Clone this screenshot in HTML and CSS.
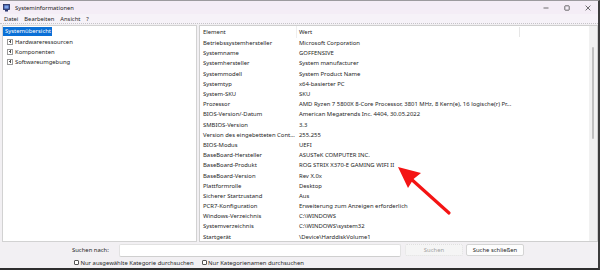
FILE: index.html
```html
<!DOCTYPE html>
<html lang="de">
<head>
<meta charset="utf-8">
<title>Systeminformationen</title>
<link rel="stylesheet" href="styles.css">
</head>
<body>
<div class="window">
  <div class="titlebar">
    <svg class="appicon" width="8" height="8" viewBox="0 0 8 8">
      <rect x="0.5" y="0.5" width="6" height="5" fill="#3b4f9a" stroke="#1f2a5c" stroke-width="0.8"/>
      <rect x="1.5" y="1.5" width="4" height="3" fill="#7fa3e6"/>
      <rect x="2" y="6" width="3" height="1.5" fill="#2a3770"/>
    </svg>
    <span class="title">Systeminformationen</span>
    <div class="controls">
      <span class="ctl"><svg width="8" height="8" viewBox="0 0 8 8"><line x1="1.5" y1="4" x2="6.5" y2="4" stroke="#333" stroke-width="0.7"/></svg></span>
      <span class="ctl"><svg width="8" height="8" viewBox="0 0 8 8"><rect x="1.8" y="1.8" width="4.4" height="4.4" rx="0.6" fill="none" stroke="#333" stroke-width="0.7"/></svg></span>
      <span class="ctl"><svg width="8" height="8" viewBox="0 0 8 8"><path d="M1.6 1.6 L6.4 6.4 M6.4 1.6 L1.6 6.4" stroke="#333" stroke-width="0.7"/></svg></span>
    </div>
  </div>
  <div class="menubar">
    <span>Datei</span><span>Bearbeiten</span><span>Ansicht</span><span>?</span>
  </div>
  <div class="main">
    <div class="tree">
      <div class="node root"><span class="sel">Systemübersicht</span></div>
      <div class="node"><span class="exp"></span>Hardwareressourcen</div>
      <div class="node"><span class="exp"></span>Komponenten</div>
      <div class="node"><span class="exp"></span>Softwareumgebung</div>
    </div>
    <div class="listpane">
      <div class="table">
        <div class="row head"><span class="c1">Element</span><span class="c2">Wert</span><span class="c3"></span></div>
        <div class="row"><span class="c1">Betriebssystemhersteller</span><span class="c2">Microsoft Corporation</span></div>
        <div class="row"><span class="c1">Systemname</span><span class="c2">GOFFENSIVE</span></div>
        <div class="row"><span class="c1">Systemhersteller</span><span class="c2">System manufacturer</span></div>
        <div class="row"><span class="c1">Systemmodell</span><span class="c2">System Product Name</span></div>
        <div class="row"><span class="c1">Systemtyp</span><span class="c2">x64-basierter PC</span></div>
        <div class="row"><span class="c1">System-SKU</span><span class="c2">SKU</span></div>
        <div class="row"><span class="c1">Prozessor</span><span class="c2">AMD Ryzen 7 5800X 8-Core Processor, 3801 MHz, 8 Kern(e), 16 logische(r) Pr...</span></div>
        <div class="row"><span class="c1">BIOS-Version/-Datum</span><span class="c2">American Megatrends Inc. 4404, 30.05.2022</span></div>
        <div class="row"><span class="c1">SMBIOS-Version</span><span class="c2">3.3</span></div>
        <div class="row"><span class="c1">Version des eingebetteten Cont...</span><span class="c2">255.255</span></div>
        <div class="row"><span class="c1">BIOS-Modus</span><span class="c2">UEFI</span></div>
        <div class="row"><span class="c1">BaseBoard-Hersteller</span><span class="c2">ASUSTeK COMPUTER INC.</span></div>
        <div class="row"><span class="c1">BaseBoard-Produkt</span><span class="c2">ROG STRIX X370-E GAMING WIFI II</span></div>
        <div class="row"><span class="c1">BaseBoard-Version</span><span class="c2">Rev X.0x</span></div>
        <div class="row"><span class="c1">Plattformrolle</span><span class="c2">Desktop</span></div>
        <div class="row"><span class="c1">Sicherer Startzustand</span><span class="c2">Aus</span></div>
        <div class="row"><span class="c1">PCR7-Konfiguration</span><span class="c2 wide">Erweiterung zum Anzeigen erforderlich</span></div>
        <div class="row"><span class="c1">Windows-Verzeichnis</span><span class="c2">C:\WINDOWS</span></div>
        <div class="row"><span class="c1">Systemverzeichnis</span><span class="c2">C:\WINDOWS\system32</span></div>
        <div class="row"><span class="c1">Startgerät</span><span class="c2">\Device\HarddiskVolume1</span></div>
      </div>
      <div class="scrollbar"><div class="thumb"></div></div>
    </div>
  </div>
  <div class="search">
    <span class="label">Suchen nach:</span>
    <span class="input"></span>
    <span class="btn disabled">Suchen</span>
    <span class="btn">Suche schließen</span>
  </div>
  <div class="checks">
    <label class="chk"><span class="box"></span>Nur ausgewählte Kategorie durchsuchen</label>
    <label class="chk second"><span class="box"></span>Nur Kategorienamen durchsuchen</label>
  </div>
  <svg class="arrow" width="600" height="270" viewBox="0 0 600 270">
    <line x1="449" y1="213" x2="410" y2="178" stroke="#f41414" stroke-width="3.2" stroke-linecap="round"/>
    <path d="M398 167 L421 173 L413.5 179 L408 188 Z" fill="#f41414"/>
  </svg>
</div>
</body>
</html>
```
FILE: styles.css
```css
html, body {
  margin: 0;
  padding: 0;
}
body {
  width: 600px;
  height: 270px;
  overflow: hidden;
  font-family: "Noto Sans", "Open Sans", sans-serif;
  font-size: 5.9px;
  color: #1e1e1e;
  background: #f0eff1;
}
.window {
  position: relative;
  width: 600px;
  height: 270px;
  box-sizing: border-box;
  border-top: 1px solid #9c9a9e;
  border-right: 2px solid #3c3c3c;
  border-bottom: 2px solid #2e2e2e;
  background: #f2f0f3;
  display: flex;
  flex-direction: column;
}
.titlebar {
  height: 13px;
  flex: none;
  background: #f4edf6;
  display: flex;
  align-items: center;
  padding-left: 3px;
}
.appicon {
  flex: none;
}
.title {
  margin-left: 4px;
  font-size: 5.8px;
  color: #1a1a1a;
}
.controls {
  margin-left: auto;
  display: flex;
  gap: 13px;
  padding-right: 6px;
}
.ctl {
  width: 8px;
  height: 8px;
  display: flex;
}
.menubar {
  height: 9px;
  flex: none;
  background: #f6f2f8;
  border-bottom: 1px dotted #c6c4c8;
  display: flex;
  align-items: center;
  gap: 6px;
  padding-left: 4px;
  font-size: 5.8px;
}
.main {
  height: 219px;
  flex: none;
  box-sizing: border-box;
  padding: 1px 0 1px 2px;
  display: flex;
  gap: 2px;
}
.tree {
  width: 195px;
  flex: none;
  box-sizing: border-box;
  background: #fff;
  border: 1px solid #d2d2d2;
  padding-top: 0.5px;
}
.node {
  height: 10px;
  display: flex;
  align-items: center;
  padding-left: 4px;
}
.node.root {
  padding-left: 0;
}
.sel {
  background: #0a6fd6;
  color: #fff;
  padding: 1px 1px 1px 2px;
  line-height: 7.7px;
}
.exp {
  width: 4px;
  height: 4px;
  border: 0.8px solid #9a9a9a;
  margin-right: 2px;
  position: relative;
  background: #fff;
}
.exp::before, .exp::after {
  content: "";
  position: absolute;
  background: #555;
}
.exp::before {
  left: 0.8px;
  right: 0.8px;
  top: 1.6px;
  height: 0.8px;
}
.exp::after {
  top: 0.8px;
  bottom: 0.8px;
  left: 1.6px;
  width: 0.8px;
}
.listpane {
  flex: 1;
  box-sizing: border-box;
  background: #fff;
  border: 1px solid #cfcfcf;
  display: flex;
  min-width: 0;
}
.table {
  flex: 1;
  min-width: 0;
}
.row {
  height: 10.2px;
  display: flex;
  align-items: center;
  white-space: nowrap;
}
.row.head {
  height: 12px;
}
.c1 {
  width: 96px;
  flex: none;
  box-sizing: border-box;
  padding-left: 3px;
  overflow: hidden;
}
.c2 {
  width: 223px;
  flex: none;
  box-sizing: border-box;
  padding-left: 3px;
  overflow: hidden;
}
.c2.wide {
  overflow: visible;
}
.head .c1, .head .c2 {
  height: 12px;
  line-height: 12px;
}
.head .c2 {
  border-left: 1px solid #eeeeee;
  padding-left: 2px;
}
.head .c3 {
  height: 10px;
  border-left: 1px solid #e6e6e6;
}
.scrollbar {
  width: 8px;
  flex: none;
  background: #f1f1f1;
  position: relative;
}
.thumb {
  position: absolute;
  left: 3px;
  top: 21px;
  width: 2px;
  height: 92px;
  border-radius: 1px;
  background: #c0c0c0;
}
.search {
  height: 14px;
  flex: none;
  display: flex;
  align-items: center;
  padding-left: 72px;
}
.label {
  width: 47px;
  flex: none;
}
.input {
  width: 282px;
  height: 13px;
  box-sizing: border-box;
  background: #fff;
  border: 1px solid #e2e2e2;
  border-bottom-color: #cfcfcf;
  border-radius: 2px;
  flex: none;
}
.btn {
  width: 58px;
  height: 12px;
  box-sizing: border-box;
  display: flex;
  align-items: center;
  justify-content: center;
  border: 1px solid #d4d4d4;
  border-radius: 2px;
  background: #fdfdfd;
  margin-left: 3px;
  flex: none;
}
.btn.disabled {
  margin-left: 4px;
  color: #a0a0a0;
  background: #f5f5f5;
  border: 1px dotted #e0e0e0;
}
.checks {
  height: 11px;
  flex: none;
  display: flex;
  align-items: center;
  padding-left: 74px;
}
.chk {
  display: flex;
  align-items: center;
}
.chk.second {
  margin-left: 8px;
}
.box {
  width: 5px;
  height: 5px;
  box-sizing: border-box;
  border: 0.8px solid #555;
  border-radius: 1px;
  background: #fff;
  margin-right: 1.5px;
}
.arrow {
  position: absolute;
  left: 0;
  top: -1px;
  pointer-events: none;
}
```
